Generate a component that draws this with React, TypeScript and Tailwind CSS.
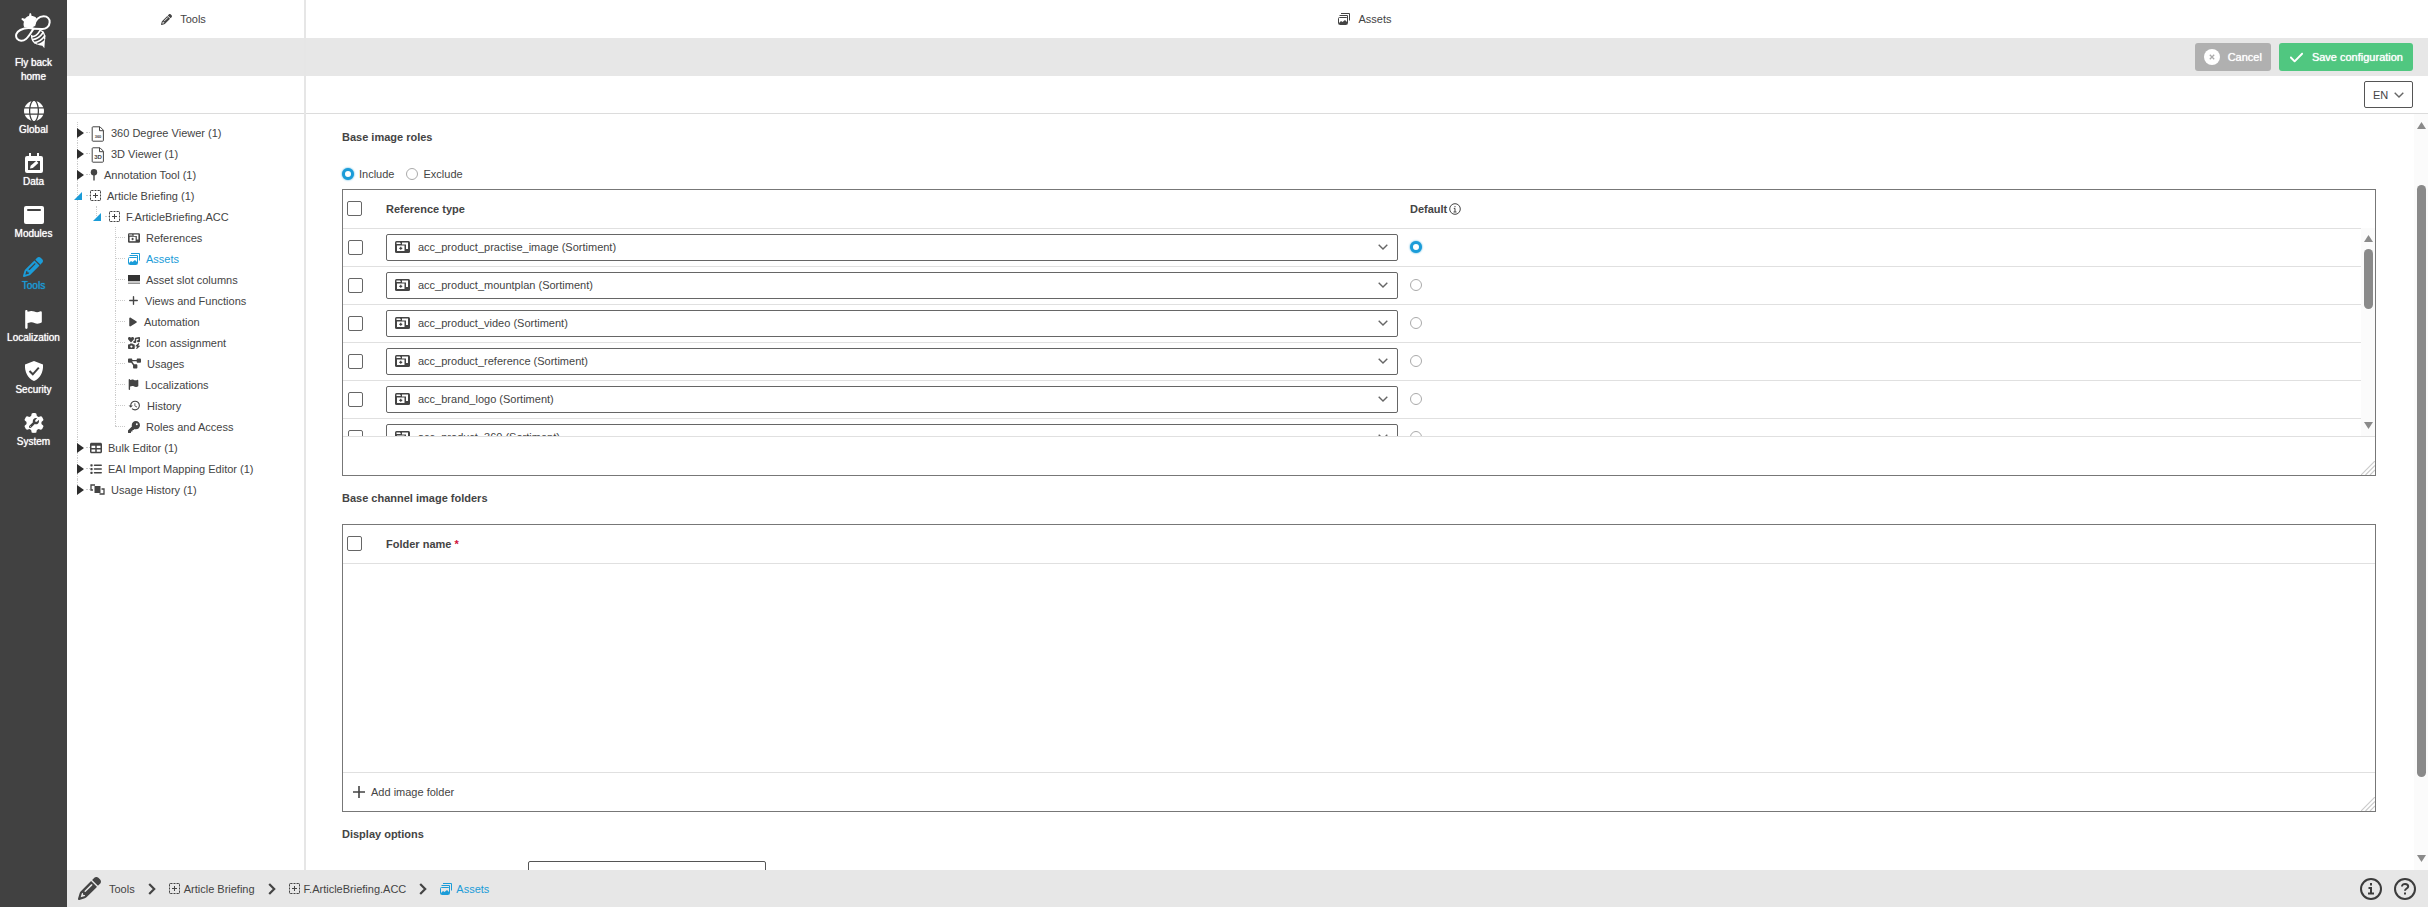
import type { ReactNode } from 'react';
import { FaCheck, FaDiagramProject, FaFlag, FaGear, FaGlobe, FaIcons, FaKey, FaList, FaPencil, FaPlay, FaPlus, FaTable, FaWrench } from 'react-icons/fa6';
import { MdHistory } from 'react-icons/md';

/* ---------- icons ---------- */

function BeeIcon() {
  return (
    <svg width="36" height="36" viewBox="46 41 108 108" fill="none" stroke="currentColor" strokeWidth="6" strokeLinecap="round" strokeLinejoin="round">
      <path d="M90 42l4 0 2 8c5 0 9 2 12 4l3 4-4 5c2 6 0 12-3 16l-6 8-24-3c-3-6-3-12-1-17l-8-7 2-4 9 2c3-4 7-7 12-8z" fill="currentColor" stroke="none" />
      <path d="M104 78c2-16 14-27 28-27 12 0 19 8 18 18-1 14-12 21-24 20l-24-1" />
      <path d="M102 88c-14-3-30-1-40 4-12 6-16 17-10 26 6 8 18 8 27 1 9-7 14-18 23-31" />
      <path d="M97 112c6 0 17-6 24-18M99 121c10-1 24-10 32-22M105 130c10-2 22-9 30-20" strokeWidth="5" />
      <path d="M112 134c8 0 18-6 24-14l-1 14-1 13-6-8c-6 0-12-2-16-5z" fill="currentColor" stroke="none" />
      <path d="M96 108c-1 12 6 22 16 26M122 93c9 3 15 14 13 26" strokeWidth="4" />
    </svg>
  );
}

function DataIcon() {
  return (
    <svg width="18" height="20" viewBox="0 0 18 20">
      <path d="M2 3h2V0h2v3h6V0h2v3h2q2 0 2 2v13q0 2-2 2H2q-2 0-2-2V5q0-2 2-2zm1 5v9h12V8z" fill="currentColor" fillRule="evenodd" />
      <path d="M5 15.500l.6-2.800 5.800-5 2 2.200-5.600 5z" fill="currentColor" />
    </svg>
  );
}

function ModulesIcon() {
  return (
    <svg width="20" height="18" viewBox="0 0 20 18">
      <rect width="20" height="18" rx="2" fill="currentColor" />
      <rect x="3" y="3" width="14" height="2" rx="1" fill="#414141" />
    </svg>
  );
}

function ShieldIcon() {
  return (
    <svg width="20" height="20" viewBox="0 0 20 20">
      <path d="M10 0l9 3.500c.5 8-3 14-9 16.500C4 17.500.5 11.500 1 3.500z" fill="currentColor" />
      <path d="M5.500 10l3.300 3.300 6-6.600" fill="none" stroke="#414141" strokeWidth="2" />
    </svg>
  );
}

function SystemIcon() {
  return (
    <span className="relative block text-[20px]">
      <FaGear />
      <span className="absolute inset-[5px] rounded-full bg-white" />
      <FaWrench className="absolute inset-[5px] text-[10px] text-[#414141]" />
    </span>
  );
}

function FileIcon({ label }: { label: string }) {
  return (
    <svg width="15" height="16" viewBox="0 0 15 16" className="mt-[3px]">
      <path d="M3 .8h7l3.400 3.400v10.200q0 .8-.8.8H3q-.8 0-.8-.8V1.600Q2.200.8 3 .8zM9.500 1v3.700h3.700" fill="none" stroke="currentColor" />
      <text x="8" y="12" textAnchor="middle" fontSize={label.length > 2 ? 4 : 6} fontWeight="700" fill="currentColor">{label}</text>
    </svg>
  );
}

function PinIcon() {
  return (
    <svg width="8" height="12" viewBox="0 0 8 12" fill="currentColor">
      <circle cx="4" cy="3.200" r="3.200" />
      <path d="M3.300 5h1.400v6l-.7 1-.7-1z" />
    </svg>
  );
}

function ArticleIcon() {
  return (
    <svg width="11" height="11" viewBox="0 0 11 11" fill="none" stroke="currentColor">
      <path d="M.5 3.500v-2q0-1 1-1h2M4.500.5h2M7.500.5h2q1 0 1 1v2M10.500 4.500v2M10.500 7.500v2q0 1-1 1h-2M6.500 10.500h-2M3.500 10.500h-2q-1 0-1-1v-2M.5 6.500v-2M5.500 3v5M3 5.500h5" />
    </svg>
  );
}

function ReferenceIcon({ className = 'h-[10px] w-[12px]' }: { className?: string }) {
  return (
    <svg className={className} viewBox="0 0 30 24">
      <path d="M3 0h24q3 0 3 3v18q0 3-3 3H3q-3 0-3-3V3q0-3 3-3z" fill="#444" />
      <path d="M3 3h7l2 3H3z" fill="#fff" />
      <path d="M4 9h15v11H4z" fill="#fff" />
      <path d="M14 3h12v13h-4V7h-8z" fill="#fff" />
      <path d="M8.500 14.500h6M11.500 11.500v6" stroke="#444" strokeWidth="2.500" />
    </svg>
  );
}

function AssetsIcon() {
  return (
    <svg width="12" height="12" viewBox="0 0 12 12" fill="none" stroke="currentColor">
      <path d="M3 .5h8.500V7.500" />
      <path d="M1.500 2.500h8v6.500" />
      <rect x=".5" y="4.500" width="9" height="7" rx="1" />
      <path d="M1 10l2-2 1.500 1L7 7l2 2v2H1z" fill="currentColor" stroke="none" />
    </svg>
  );
}

function SlotIcon() {
  return (
    <svg width="12" height="9" viewBox="0 0 12 9">
      <path d="M0 0h12v6H0z" fill="#333" />
      <path d="M0 7h12M0 8.500h12" stroke="#777" strokeWidth=".8" />
    </svg>
  );
}

function UsageHistoryIcon() {
  return (
    <svg width="15" height="11" viewBox="0 0 15 11">
      <path d="M4.500 2h6v7h-6z" fill="currentColor" />
      <path d="M3 6H1V1h4M11.500 5H14v5H9.500" fill="none" stroke="currentColor" strokeWidth="1.300" />
    </svg>
  );
}

function Chevron({ className = '' }: { className?: string }) {
  return (
    <svg width="10" height="6" viewBox="0 0 10 6" className={`pointer-events-none ${className}`}>
      <path d="M.7.700L5 5 9.300.700" fill="none" stroke="#666" strokeWidth="1.400" />
    </svg>
  );
}

function Crumb() {
  return (
    <svg width="8" height="12" viewBox="0 0 8 12">
      <path d="M1.200 1L6.200 6l-5 5" fill="none" stroke="#444" strokeWidth="2.200" />
    </svg>
  );
}

function ResizeGrip() {
  return (
    <svg width="14" height="14" viewBox="0 0 14 14" className="self-end">
      <path d="M0 14L14 0M4.500 14L14 4.500M9 14l5-5" stroke="#ccc" strokeWidth="1.200" />
    </svg>
  );
}

/* ---------- data ---------- */

const navItems = [
  { label: 'Global', icon: <FaGlobe size={20} /> },
  { label: 'Data', icon: <DataIcon /> },
  { label: 'Modules', icon: <ModulesIcon /> },
  { label: 'Tools', icon: <FaPencil size={20} />, active: true },
  { label: 'Localization', icon: <FaFlag size={19} /> },
  { label: 'Security', icon: <ShieldIcon /> },
  { label: 'System', icon: <SystemIcon /> },
];

interface TreeNode {
  label: string;
  icon: ReactNode;
  active?: boolean;
  children?: TreeNode[];
  leaf?: boolean;
}

const tree: TreeNode[] = [
  { label: '360 Degree Viewer (1)', icon: <FileIcon label="360" /> },
  { label: '3D Viewer (1)', icon: <FileIcon label="3D" /> },
  { label: 'Annotation Tool (1)', icon: <PinIcon /> },
  {
    label: 'Article Briefing (1)',
    icon: <ArticleIcon />,
    children: [
      {
        label: 'F.ArticleBriefing.ACC',
        icon: <ArticleIcon />,
        children: [
          { label: 'References', icon: <ReferenceIcon />, leaf: true },
          { label: 'Assets', icon: <AssetsIcon />, leaf: true, active: true },
          { label: 'Asset slot columns', icon: <SlotIcon />, leaf: true },
          { label: 'Views and Functions', icon: <FaPlus size={11} />, leaf: true },
          { label: 'Automation', icon: <FaPlay size={10} />, leaf: true },
          { label: 'Icon assignment', icon: <FaIcons size={12} />, leaf: true },
          { label: 'Usages', icon: <FaDiagramProject size={13} />, leaf: true },
          { label: 'Localizations', icon: <FaFlag size={11} />, leaf: true },
          { label: 'History', icon: <MdHistory size={13} />, leaf: true },
          { label: 'Roles and Access', icon: <FaKey size={12} />, leaf: true },
        ],
      },
    ],
  },
  { label: 'Bulk Editor (1)', icon: <FaTable size={12} /> },
  { label: 'EAI Import Mapping Editor (1)', icon: <FaList size={12} /> },
  { label: 'Usage History (1)', icon: <UsageHistoryIcon /> },
];

const referenceTypes = [
  'acc_product_practise_image (Sortiment)',
  'acc_product_mountplan (Sortiment)',
  'acc_product_video (Sortiment)',
  'acc_product_reference (Sortiment)',
  'acc_brand_logo (Sortiment)',
  'acc_product_360 (Sortiment)',
];

/* ---------- parts ---------- */

function Tree({ nodes, nested = false }: { nodes: TreeNode[]; nested?: boolean }) {
  return (
    <ul className={nested ? 'ml-[19px]' : ''}>
      {nodes.map((node) => (
        <li
          key={node.label}
          className="relative before:absolute before:left-0 before:top-0 before:h-full before:border-l before:border-dotted before:border-[#ccc] last:before:h-[10px]"
        >
          <div className="flex h-[21px] items-center">
            {node.leaf ? (
              <span className="mr-[3px] w-[10px] border-t border-dotted border-[#ccc]" />
            ) : (
              <>
                <button type="button" aria-label={`Toggle ${node.label}`} className="relative -ml-[3px] flex w-3 pl-[3px]">
                  {node.children ? (
                    <svg width="8" height="8" viewBox="0 0 8 8" className="-ml-[3px]">
                      <path d="M8 0v8H0z" fill="#1b9cd8" />
                    </svg>
                  ) : (
                    <svg width="7" height="10" viewBox="0 0 7 10">
                      <path d="M0 0l7 5-7 5z" fill="#2c2c2c" />
                    </svg>
                  )}
                </button>
                <span className="w-1 border-t border-dotted border-[#ccc]" />
              </>
            )}
            <a href="#" className={`flex items-center gap-[6px] whitespace-nowrap ${node.active ? 'text-[#1b9cd8]' : ''}`}>
              {node.icon}
              {node.label}
            </a>
          </div>
          {node.children && <Tree nodes={node.children} nested />}
        </li>
      ))}
    </ul>
  );
}

function Checkbox({ label }: { label: string }) {
  return (
    <input
      type="checkbox"
      aria-label={label}
      className="block size-[15px] appearance-none rounded-[2px] border border-[#666] bg-white"
    />
  );
}

const radioClass =
  'block size-3 appearance-none rounded-full border border-[#aaa] bg-white checked:border-[3px] checked:border-[#1b9cd8] checked:shadow-[0_0_2px_#1b9cd8]';

function ScrollBar({ className, children }: { className: string; children: ReactNode }) {
  return (
    <div className={`flex flex-col items-center bg-[#fbfbfb] ${className}`} aria-hidden="true">
      <svg width="9" height="7" viewBox="0 0 9 7">
        <path d="M4.500 0L9 7H0z" fill="#8a8a8a" />
      </svg>
      <div className="flex w-[9px] flex-1 flex-col">{children}</div>
      <svg width="9" height="7" viewBox="0 0 9 7">
        <path d="M4.500 7L9 0H0z" fill="#8a8a8a" />
      </svg>
    </div>
  );
}

function NavBar() {
  return (
    <nav className="flex w-[67px] shrink-0 flex-col items-center bg-[#414141] text-[10px] text-white">
      <a href="#" className="mt-[13px] flex flex-col items-center text-center leading-[14px] [text-shadow:0_0_1px_currentColor]">
        <BeeIcon />
        <span className="mt-[7px]">
          Fly back
          <br />
          home
        </span>
      </a>
      <div className="mt-[17px] flex flex-col items-center">
        {navItems.map((item) => (
          <a
            key={item.label}
            href="#"
            className={`flex h-[52px] flex-col items-center [text-shadow:0_0_1px_currentColor] ${item.active ? 'text-[#1b9cd8]' : ''}`}
          >
            <span className="flex h-5 items-center">{item.icon}</span>
            <span className="leading-[18px]">{item.label}</span>
          </a>
        ))}
      </div>
    </nav>
  );
}

function ReferenceTable() {
  return (
    <div className="border border-[#777]">
      <div className="relative h-[247px] overflow-hidden border-b border-[#e0e0e0]">
        <table className="w-full table-fixed text-left">
          <colgroup>
            <col className="w-[43px]" />
            <col className="w-1/2" />
            <col />
          </colgroup>
          <thead>
            <tr className="h-[38px] border-b border-[#e0e0e0]">
              <th className="pl-1">
                <Checkbox label="Select all reference types" />
              </th>
              <th>Reference type</th>
              <th className="pl-2">
                <span className="flex items-center gap-[2px]">
                  Default
                  <svg width="12" height="12" viewBox="0 0 12 12" fill="none" stroke="#444">
                    <circle cx="6" cy="6" r="5.300" />
                    <path d="M6 3v1.200M4.800 5.400H6V9M4.500 9h3" />
                  </svg>
                </span>
              </th>
            </tr>
          </thead>
          <tbody>
            {referenceTypes.map((type, i) => (
              <tr key={type} className="h-[38px] border-b border-[#e0e0e0]">
                <td className="pl-[5px]">
                  <Checkbox label={`Select ${type}`} />
                </td>
                <td className="pr-1">
                  <div className="relative flex items-center">
                    <select
                      aria-label="Reference type"
                      className="h-[27px] w-full appearance-none rounded-[2px] border border-[#666] bg-white pl-[31px]"
                    >
                      <option>{type}</option>
                    </select>
                    <ReferenceIcon className="pointer-events-none absolute left-[9px] h-3 w-[15px]" />
                    <Chevron className="absolute right-[10px]" />
                  </div>
                </td>
                <td className="pl-2">
                  <input type="radio" name="default" aria-label={`Default ${type}`} defaultChecked={i === 0} className={radioClass} />
                </td>
              </tr>
            ))}
          </tbody>
        </table>
        <ScrollBar className="absolute bottom-0 right-0 top-[38px] w-[14px] py-[7px]">
          <div className="mt-[7px] h-[60px] rounded-full bg-[#8a8a8a]" />
        </ScrollBar>
      </div>
      <div className="flex h-[38px] justify-end">
        <ResizeGrip />
      </div>
    </div>
  );
}

function FolderTable() {
  return (
    <div className="border border-[#777]">
      <div className="h-[248px] border-b border-[#e0e0e0]">
        <table className="w-full table-fixed text-left">
          <colgroup>
            <col className="w-[43px]" />
            <col />
          </colgroup>
          <thead>
            <tr className="h-[38px] border-b border-[#e0e0e0]">
              <th className="pl-1">
                <Checkbox label="Select all folders" />
              </th>
              <th>
                Folder name <span className="text-[#d0103a]">*</span>
              </th>
            </tr>
          </thead>
        </table>
      </div>
      <div className="flex h-[38px] justify-between">
        <button type="button" className="flex items-center gap-[6px] pl-[10px]">
          <svg width="12" height="12" viewBox="0 0 12 12">
            <path d="M6 0v12M0 6h12" stroke="#444" strokeWidth="1.600" />
          </svg>
          Add image folder
        </button>
        <ResizeGrip />
      </div>
    </div>
  );
}

export default function App() {
  return (
    <div className="flex h-screen bg-white font-['Liberation_Sans',Arial,sans-serif] text-[11px] leading-4 text-[#444]">
      <NavBar />
      <div className="flex min-w-0 flex-1 flex-col">
        <div className="flex min-h-0 flex-1">
          <aside className="flex w-[239px] shrink-0 flex-col border-r-2 border-[#e6e6e6]">
            <h1 className="flex h-[38px] items-center justify-center gap-2 pr-1">
              <FaPencil size={11} />
              Tools
            </h1>
            <div className="h-[38px] bg-[#e7e7e7]" />
            <div className="h-[38px] border-b border-[#dcdcdc]" />
            <div className="pl-[10px] pt-2">
              <Tree nodes={tree} />
            </div>
          </aside>

          <main className="flex min-w-0 flex-1 flex-col">
            <h2 className="flex h-[38px] shrink-0 items-center justify-center gap-2 pr-1">
              <AssetsIcon />
              Assets
            </h2>
            <div className="flex h-[38px] shrink-0 items-center justify-end gap-2 bg-[#e7e7e7] pr-[15px] text-white">
              <button type="button" className="flex h-7 items-center gap-2 rounded-[3px] bg-[#b0b0b0] px-[9px] [text-shadow:0_0_1px_currentColor]">
                <svg width="16" height="16" viewBox="0 0 16 16">
                  <circle cx="8" cy="8" r="8" fill="#fff" />
                  <path d="M5.800 5.800l4.400 4.400M10.200 5.800l-4.400 4.400" stroke="#aaa" strokeWidth="1.300" />
                </svg>
                Cancel
              </button>
              <button type="button" className="flex h-7 items-center gap-2 rounded-[3px] bg-[#50c780] px-[10px] [text-shadow:0_0_1px_currentColor]">
                <FaCheck size={15} />
                Save configuration
              </button>
            </div>
            <div className="flex h-[38px] shrink-0 items-center justify-end border-b border-[#dcdcdc] pr-[15px]">
              <div className="relative flex items-center">
                <select aria-label="Language" className="h-[27px] w-[49px] appearance-none rounded-[2px] border border-[#555] bg-white pl-2">
                  <option>EN</option>
                </select>
                <Chevron className="absolute right-[9px]" />
              </div>
            </div>

            <div className="flex min-h-0 flex-1">
              <div className="min-w-0 flex-1 overflow-hidden pl-9 pr-[38px] pt-[15px]">
                <h3 className="font-bold">Base image roles</h3>
                <div className="mb-[7px] mt-[21px] flex gap-3">
                  <label className="flex items-center gap-[5px]">
                    <input type="radio" name="mode" defaultChecked className={radioClass} />
                    Include
                  </label>
                  <label className="flex items-center gap-[5px]">
                    <input type="radio" name="mode" className={radioClass} />
                    Exclude
                  </label>
                </div>
                <ReferenceTable />

                <h3 className="mb-[18px] mt-[14px] font-bold">Base channel image folders</h3>
                <FolderTable />

                <h3 className="mb-[19px] mt-[14px] font-bold">Display options</h3>
                <input type="text" aria-label="Display option" className="ml-[186px] h-[27px] w-[238px] rounded-[2px] border border-[#555]" />
              </div>
              <ScrollBar className="w-[14px] py-2">
                <div className="flex-[56]" />
                <div className="flex-[592] rounded-full bg-[#8a8a8a]" />
                <div className="flex-[78]" />
              </ScrollBar>
            </div>
          </main>
        </div>

        <footer className="flex h-[37px] shrink-0 items-center justify-between bg-[#e7e7e7] pl-[11px] pr-3">
          <div className="flex items-center gap-[13px]">
            <a href="#" className="flex items-center gap-2">
              <FaPencil size={23} />
              Tools
            </a>
            <Crumb />
            <a href="#" className="flex items-center gap-1">
              <ArticleIcon />
              Article Briefing
            </a>
            <Crumb />
            <a href="#" className="flex items-center gap-1">
              <ArticleIcon />
              F.ArticleBriefing.ACC
            </a>
            <Crumb />
            <a href="#" className="flex items-center gap-1 text-[#1b9cd8]">
              <AssetsIcon />
              Assets
            </a>
          </div>
          <div className="flex items-center gap-3">
            <button type="button" aria-label="Info">
              <svg width="22" height="22" viewBox="0 0 22 22" fill="none" stroke="#3c3c3c" strokeWidth="2">
                <circle cx="11" cy="11" r="10" />
                <path d="M11 5v2.500M8.500 10H11v5.500M8 15.500h6" />
              </svg>
            </button>
            <button type="button" aria-label="Help">
              <svg width="22" height="22" viewBox="0 0 22 22" fill="none" stroke="#3c3c3c" strokeWidth="2">
                <circle cx="11" cy="11" r="10" />
                <path d="M8 8.500c0-3.500 6.200-3.300 6.200 0 0 2-3.200 2-3.200 4.200M11 14.500v2" />
              </svg>
            </button>
          </div>
        </footer>
      </div>
    </div>
  );
}
